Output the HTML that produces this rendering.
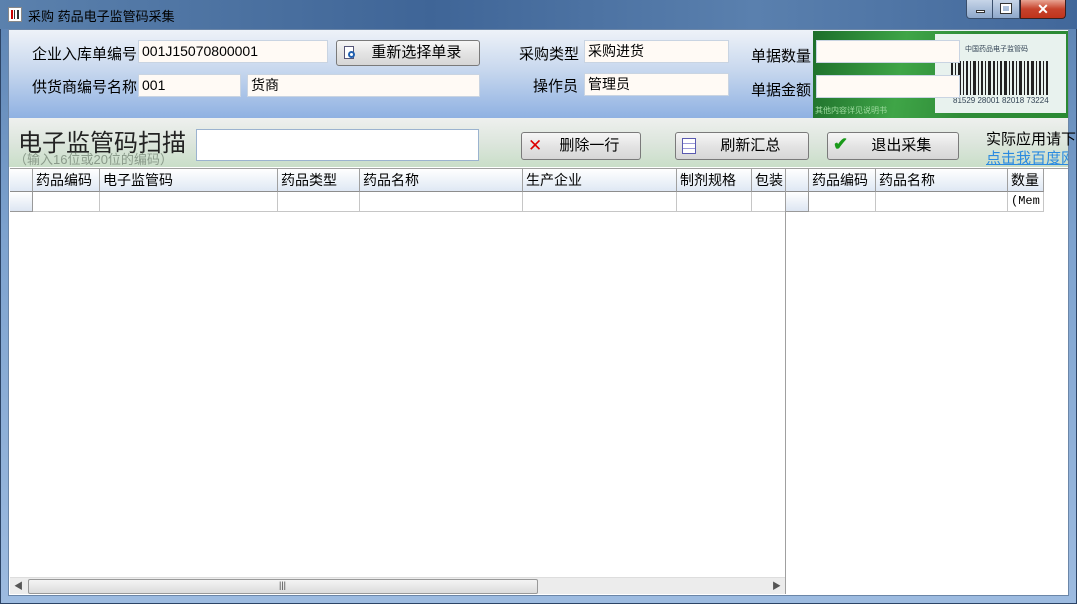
<!DOCTYPE html>
<html><head><meta charset="utf-8">
<style>
*{margin:0;padding:0;box-sizing:border-box}
body{width:1077px;height:604px;overflow:hidden;position:relative;font-family:"Liberation Sans","Noto Sans CJK SC","WenQuanYi Zen Hei",sans-serif;font-size:14px;color:#000;background:#6f93bf}
.a{position:absolute}
.frame{left:0;top:0;width:1077px;height:604px;background:linear-gradient(180deg,#4b6f9c 0,#5f86b5 25px,#7ea3cf 40%,#9dbbe0 100%);border:1px solid #2c4466;border-radius:6px 6px 0 0}
.title{left:0;top:0;width:1077px;height:29px;background:linear-gradient(90deg,#5b81ad,#3f6597 40%,#5a80ae 70%,#41679a)}
.client{left:8px;top:29px;width:1061px;height:567px;background:#fff;border:1px solid #6b86a8}
.lab{font-size:15px;white-space:nowrap}
.inp{background:#fffaf5;border:1px solid #c9d4e2;font-size:14px;padding:0 0 0 3px;line-height:20px;height:23px}
.btn{border:1px solid #7a7a7a;border-radius:3px;background:linear-gradient(#f6f6f6,#e4e4e4 50%,#d6d6d6);font-size:15px;text-align:center;line-height:26px;height:28px}
.hd{background:linear-gradient(#fff,#dfe8f4);border-right:1px solid #a0a0a0;border-bottom:1px solid #8d8d8d;height:23px;line-height:22px;padding-left:3px;font-size:14px;white-space:nowrap;overflow:hidden}
.cell{border-right:1px solid #c6c6c6;border-bottom:1px solid #c6c6c6;height:20px}
</style></head><body>
<div class="a frame"></div>
<div class="a title"></div>
<div class="a" style="left:8px;top:7px;width:14px;height:15px;background:#fff;border:1px solid #888">
<div class="a" style="left:2px;top:2px;width:2px;height:9px;background:#c00"></div>
<div class="a" style="left:5px;top:2px;width:1px;height:9px;background:#333"></div>
<div class="a" style="left:8px;top:2px;width:2px;height:9px;background:#333"></div>
</div>
<div class="a" style="left:28px;top:6px;font-size:13px;color:#000">采购 药品电子监管码采集</div>
<div class="a" style="left:966px;top:0;width:27px;height:19px;border:1px solid #3a4f6c;border-top:none;border-radius:0 0 0 4px;background:linear-gradient(#c7d5e8,#8ea8cb)"><div class="a" style="left:9px;top:10px;width:9px;height:3px;background:#fff;border:1px solid #333"></div></div>
<div class="a" style="left:993px;top:0;width:27px;height:19px;border:1px solid #3a4f6c;border-top:none;border-left:none;background:linear-gradient(#c7d5e8,#8ea8cb)"><div class="a" style="left:8px;top:4px;width:10px;height:9px;border:2px solid #fff;outline:1px solid #333"></div></div>
<div class="a" style="left:1020px;top:0;width:46px;height:19px;border:1px solid #3a2020;border-top:none;border-radius:0 0 4px 0;background:linear-gradient(#e8a493,#c7432c 50%,#c0341c);color:#fff;font-weight:bold;font-size:14px;text-align:center;line-height:18px">✕</div>

<div class="a client"></div>
<div class="a" style="left:9px;top:30px;width:1059px;height:88px;background:linear-gradient(#eef2f8,#c8d8ee 45%,#8fb1e2)"></div>
<div class="a lab" style="left:32px;top:43px">企业入库单编号</div>
<div class="a inp" style="left:138px;top:40px;width:190px">001J15070800001</div>
<div class="a btn" style="left:336px;top:40px;width:144px;height:26px;line-height:24px">&nbsp;&nbsp;&nbsp;&nbsp;重新选择单录</div>
<div class="a" style="left:344px;top:46px;width:10px;height:13px;background:#fff;border:1px solid #557"></div>
<div class="a" style="left:348px;top:51px;width:7px;height:7px;border:2px solid #2060b0;border-radius:50%"></div>
<div class="a lab" style="left:32px;top:76px">供货商编号名称</div>
<div class="a inp" style="left:138px;top:74px;width:103px">001</div>
<div class="a inp" style="left:247px;top:74px;width:233px">货商</div>
<div class="a lab" style="left:519px;top:43px">采购类型</div>
<div class="a inp" style="left:584px;top:40px;width:145px">采购进货</div>
<div class="a lab" style="left:533px;top:75px">操作员</div>
<div class="a inp" style="left:584px;top:73px;width:145px">管理员</div>
<div class="a lab" style="left:751px;top:45px">单据数量</div>
<div class="a lab" style="left:751px;top:79px">单据金额</div>
<div class="a" style="left:813px;top:31px;width:255px;height:87px;background:linear-gradient(100deg,#1d6e2a,#3fa547 35%,#2f8c38 60%,#2a8a33);overflow:hidden">
<div class="a" style="left:2px;top:74px;font-size:8px;color:#9fdca0">其他内容详见说明书</div>
<div class="a" style="left:122px;top:3px;width:131px;height:79px;background:#e8f2ee">
<div class="a" style="left:30px;top:10px;font-size:7px;color:#345">中国药品电子监管码</div>
<svg class="a" style="left:16px;top:27px" width="98" height="34"><g fill="#222">
<rect x="0" y="0" width="2" height="34"/><rect x="4" y="0" width="1" height="34"/><rect x="7" y="0" width="3" height="34"/><rect x="12" y="0" width="1" height="34"/><rect x="15" y="0" width="2" height="34"/><rect x="19" y="0" width="1" height="34"/><rect x="22" y="0" width="3" height="34"/><rect x="27" y="0" width="1" height="34"/><rect x="30" y="0" width="2" height="34"/><rect x="34" y="0" width="1" height="34"/><rect x="37" y="0" width="3" height="34"/><rect x="42" y="0" width="2" height="34"/><rect x="46" y="0" width="1" height="34"/><rect x="49" y="0" width="2" height="34"/><rect x="53" y="0" width="3" height="34"/><rect x="58" y="0" width="1" height="34"/><rect x="61" y="0" width="2" height="34"/><rect x="65" y="0" width="1" height="34"/><rect x="68" y="0" width="3" height="34"/><rect x="73" y="0" width="1" height="34"/><rect x="76" y="0" width="2" height="34"/><rect x="80" y="0" width="3" height="34"/><rect x="85" y="0" width="1" height="34"/><rect x="88" y="0" width="2" height="34"/><rect x="92" y="0" width="1" height="34"/><rect x="95" y="0" width="2" height="34"/></g></svg>
<div class="a" style="left:18px;top:62px;font-size:8px;color:#345;white-space:nowrap">81529 28001 82018 73224</div>
</div></div>
<div class="a inp" style="left:816px;top:40px;width:144px"></div>
<div class="a inp" style="left:816px;top:75px;width:144px"></div>

<div class="a" style="left:9px;top:118px;width:1059px;height:49px;background:linear-gradient(#eef0ee,#dde6dd 50%,#c9dec8)"></div>
<div class="a" style="left:18px;top:129px;font-size:24px;line-height:30px;color:#222;white-space:nowrap">电子监管码扫描</div>
<div class="a" style="left:14px;top:152px;font-size:13px;line-height:15px;color:#8a9a8a;white-space:nowrap">（输入16位或20位的编码）</div>
<div class="a" style="left:196px;top:129px;width:283px;height:32px;background:#fff;border:1px solid #9bb3cf"></div>
<div class="a btn" style="left:521px;top:132px;width:120px">&nbsp;&nbsp;&nbsp;&nbsp;删除一行</div>
<div class="a" style="left:528px;top:136px;color:#d00;font-size:17px">✕</div>
<div class="a btn" style="left:675px;top:132px;width:134px">&nbsp;&nbsp;&nbsp;&nbsp;刷新汇总</div>
<div class="a" style="left:682px;top:138px;width:14px;height:16px;border:1px solid #5a5ab0;background:repeating-linear-gradient(#fff 0 4px,#9a9ad8 4px 5px)"></div>
<div class="a btn" style="left:827px;top:132px;width:132px">&nbsp;&nbsp;&nbsp;&nbsp;退出采集</div>
<div class="a" style="left:833px;top:134px;color:#1a9a1a;font-size:18px;font-weight:bold">✔</div>
<div class="a" style="left:986px;top:128px;font-size:15px;white-space:nowrap">实际应用请下</div>
<div class="a" style="left:986px;top:147px;font-size:15px;color:#2a8ae0;text-decoration:underline;white-space:nowrap;width:82px;overflow:hidden">点击我百度网</div>

<div class="a" style="left:10px;top:168px;width:776px;height:426px;background:#fff;border-top:1px solid #a0a0a0;overflow:hidden">
<div class="a hd" style="left:0;top:0;width:23px"></div>
<div class="a hd" style="left:23px;top:0;width:67px">药品编码</div>
<div class="a hd" style="left:90px;top:0;width:178px">电子监管码</div>
<div class="a hd" style="left:268px;top:0;width:82px">药品类型</div>
<div class="a hd" style="left:350px;top:0;width:163px">药品名称</div>
<div class="a hd" style="left:513px;top:0;width:154px">生产企业</div>
<div class="a hd" style="left:667px;top:0;width:75px">制剂规格</div>
<div class="a hd" style="left:742px;top:0;width:34px">包装</div>
<div class="a" style="left:0;top:23px;width:23px;height:20px;background:linear-gradient(#fff,#dde6f2);border-right:1px solid #999;border-bottom:1px solid #999"></div>
<div class="a cell" style="left:23px;top:23px;width:67px"></div>
<div class="a cell" style="left:90px;top:23px;width:178px"></div>
<div class="a cell" style="left:268px;top:23px;width:82px"></div>
<div class="a cell" style="left:350px;top:23px;width:163px"></div>
<div class="a cell" style="left:513px;top:23px;width:154px"></div>
<div class="a cell" style="left:667px;top:23px;width:75px"></div>
<div class="a cell" style="left:742px;top:23px;width:34px"></div>
<div class="a" style="left:0;top:408px;width:775px;height:17px;background:#ececec;border-top:1px solid #ddd"></div>
<div class="a" style="left:4px;top:410px;font-size:9px;color:#555">◀</div>
<div class="a" style="left:18px;top:410px;width:510px;height:15px;border:1px solid #999;border-radius:2px;background:linear-gradient(#f4f4f4,#dcdcdc)"></div>
<div class="a" style="left:269px;top:411px;font-size:9px;color:#444">|||</div>
<div class="a" style="left:762px;top:410px;font-size:9px;color:#555">▶</div>
</div>
<div class="a" style="left:785px;top:168px;width:1px;height:426px;background:#a0a0a0"></div>
<div class="a" style="left:786px;top:168px;width:282px;height:426px;background:#fff;border-top:1px solid #a0a0a0">
<div class="a hd" style="left:0;top:0;width:23px"></div>
<div class="a hd" style="left:23px;top:0;width:67px">药品编码</div>
<div class="a hd" style="left:90px;top:0;width:132px">药品名称</div>
<div class="a hd" style="left:222px;top:0;width:36px">数量</div>
<div class="a" style="left:0;top:23px;width:23px;height:20px;background:linear-gradient(#fff,#dde6f2);border-right:1px solid #999;border-bottom:1px solid #999"></div>
<div class="a cell" style="left:23px;top:23px;width:67px"></div>
<div class="a cell" style="left:90px;top:23px;width:132px"></div>
<div class="a cell" style="left:222px;top:23px;width:36px;font-family:'Liberation Mono',monospace;font-size:12px;line-height:19px;padding-left:3px;overflow:hidden;white-space:nowrap">(Mem</div>
</div>
</body></html>
